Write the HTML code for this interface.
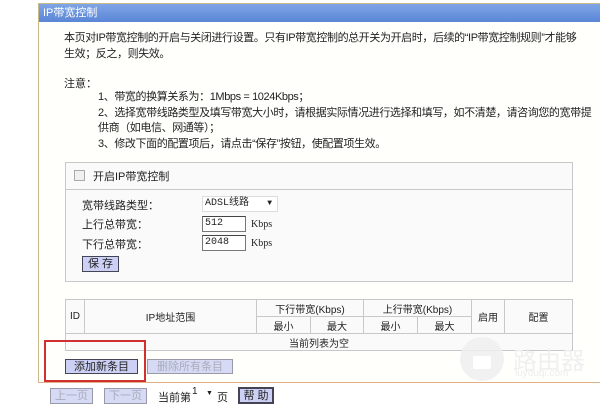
<!DOCTYPE html>
<html><head><meta charset="utf-8"><style>
*{margin:0;padding:0;box-sizing:border-box}
body{width:600px;height:403px;background:#fff;position:relative;overflow:hidden;font-family:"Liberation Sans","Noto Sans CJK SC","WenQuanYi Zen Hei",sans-serif;font-size:11px;color:#222}
.a{position:absolute;white-space:nowrap}
.t{letter-spacing:-0.4px}
#panel{position:absolute;left:38px;top:3px;width:570px;height:380px;border:1px solid #c9b88a;border-bottom:1px solid #e0b08a;background:#fffffb}
#title{position:absolute;left:39px;top:4px;width:561px;height:18px;background:linear-gradient(#7fa5e6,#5a86d6);color:#fff;font-size:11px;line-height:18px;padding-left:4px}
.box{position:absolute;border:1px solid #c8c8c8;background:#fafafa}
.inp{position:absolute;border:1px solid #777;border-top-color:#444;background:#fff;font-size:10px;padding-left:2px;line-height:14px;font-family:"Liberation Mono",monospace}
.btn{position:absolute;border:1px solid #445;background:#ccd0f4;text-align:center;font-size:11px;line-height:14px}
.dis{border-color:#99a;color:#aab;background:#d6daf4}
table{position:absolute;left:65px;top:299px;width:508px;border-collapse:collapse;font-size:10px}
td{border:1px solid #c8c8c8;text-align:center;height:17px;padding:0;background:#fafafa}
</style></head><body>
<div id="panel"></div>
<div id="title">IP带宽控制</div>
<div class="a t" style="left:64px;top:30px;line-height:16px">本页对IP带宽控制的开启与关闭进行设置。只有IP带宽控制的总开关为开启时，后续的“IP带宽控制规则”才能够<br>生效；反之，则失效。</div>
<div class="a" style="left:64px;top:75px">注意：</div>
<div class="a t" style="left:98px;top:90px;line-height:15.7px">1、带宽的换算关系为：1Mbps = 1024Kbps；<br>2、选择宽带线路类型及填写带宽大小时，请根据实际情况进行选择和填写，如不清楚，请咨询您的宽带提<br>供商（如电信、网通等）；<br>3、修改下面的配置项后，请点击“保存”按钮，使配置项生效。</div>
<div class="box" style="left:65px;top:162px;width:508px;height:120px"></div>
<div class="a" style="left:65px;top:189px;width:508px;border-top:1px solid #c8c8c8"></div>
<div class="a" style="left:74px;top:170px;width:11px;height:11px;border:1px solid #aaa;background:#f0f0f0"></div>
<div class="a" style="left:93px;top:168px">开启IP带宽控制</div>
<div class="a" style="left:82px;top:197px">宽带线路类型：</div>
<div class="a" style="left:82px;top:216px">上行总带宽：</div>
<div class="a" style="left:82px;top:236px">下行总带宽：</div>
<div class="inp" style="left:202px;top:196px;width:76px;height:16px;border-color:#ddd;font-size:10px">ADSL线路<span style="position:absolute;right:5px;top:0;font-size:8px">▼</span></div>
<div class="inp" style="left:202px;top:216px;width:44px;height:16px">512</div>
<div class="inp" style="left:202px;top:235px;width:44px;height:16px">2048</div>
<div class="a" style="left:251px;top:219px;font-size:10px;font-family:'Liberation Serif',serif">Kbps</div>
<div class="a" style="left:251px;top:238px;font-size:10px;font-family:'Liberation Serif',serif">Kbps</div>
<div class="btn" style="left:82px;top:256px;width:37px;height:16px">保 存</div>
<table>
<tr><td rowspan="2" style="width:19px">ID</td><td rowspan="2" style="width:172px">IP地址范围</td><td colspan="2">下行带宽(Kbps)</td><td colspan="2">上行带宽(Kbps)</td><td rowspan="2" style="width:33px">启用</td><td rowspan="2">配置</td></tr>
<tr><td style="width:54px">最小</td><td style="width:53px">最大</td><td style="width:54px">最小</td><td style="width:54px">最大</td></tr>
<tr><td colspan="8">当前列表为空</td></tr>
</table>
<div class="btn" style="left:65px;top:359px;width:73px;height:15px">添加新条目</div>
<div class="btn dis" style="left:147px;top:359px;width:86px;height:15px">删除所有条目</div>
<div class="a" style="left:44px;top:340px;width:102px;height:42px;border:2px solid #d03030"></div>
<div class="btn dis" style="left:50px;top:388px;width:43px;height:16px">上一页</div>
<div class="btn dis" style="left:104px;top:388px;width:43px;height:16px">下一页</div>
<div class="a" style="left:158px;top:389px">当前第</div>
<div class="a" style="left:192px;top:386px;font-size:10px;line-height:12px">1</div>
<div class="a" style="left:206px;top:390px;font-size:7px">▼</div>
<div class="a" style="left:217px;top:389px">页</div>
<div class="btn" style="left:238px;top:387px;width:36px;height:17px;border:2px solid #445">帮 助</div>
<div class="a" style="left:460px;top:337px;width:44px;height:44px;border-radius:50%;background:rgba(238,238,238,.85)"></div>
<div class="a" style="left:473px;top:356px;width:18px;height:13px;border-radius:2px;background:#fff"></div>
<div class="a" style="left:513px;top:341px;font-size:24px;color:rgba(238,238,238,.9)">路由器</div>
<div class="a" style="left:515px;top:368px;font-size:10px;color:rgba(235,235,235,.9)">luyouqi.com</div>
</body></html>
